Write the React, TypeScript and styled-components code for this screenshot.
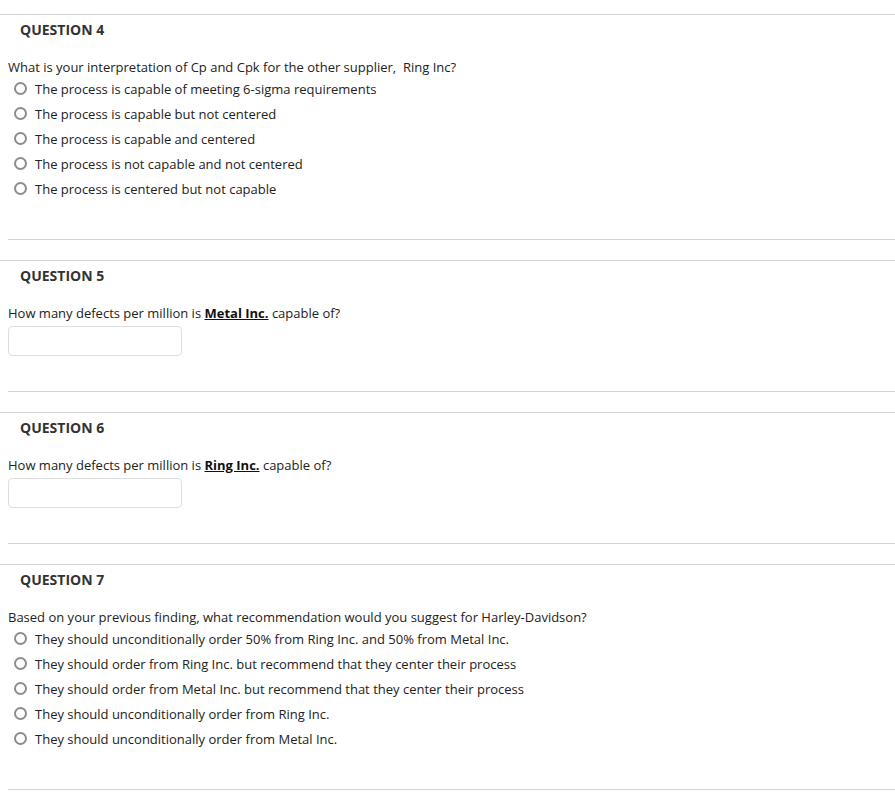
import React from "react";
import styled, { createGlobalStyle } from "styled-components";

const GlobalStyle = createGlobalStyle`
  body {
    margin: 0;
    background: #fff;
    font-family: "Open Sans", "Liberation Sans", sans-serif;
    color: #222;
  }
`;

const Page = styled.div`
  padding-top: 14px;
  width: 895px;
`;

const QuestionBlock = styled.section`
  display: flex;
  flex-direction: column;
  margin-bottom: 20px;
`;

const TopRule = styled.div`
  height: 1px;
  background: #d3d3d3;
`;

const BottomRule = styled.div`
  height: 1px;
  margin-left: 8px;
  background: #d3d3d3;
`;

const Heading = styled.h3`
  margin: 6px 0 0 20px;
  font-size: 14px;
  line-height: 18px;
  font-weight: 700;
  color: #333;
`;

const Prompt = styled.div`
  margin: 19px 0 0 8px;
  font-size: 13px;
  line-height: 18px;
  color: #222;
`;

const Strong = styled.span`
  font-weight: 700;
  color: #111;
  text-decoration: underline;
`;

const OptionList = styled.div`
  display: flex;
  flex-direction: column;
  margin-bottom: 38px;
`;

const Option = styled.label`
  display: flex;
  align-items: center;
  height: 25px;
  padding-left: 14px;
  font-size: 13px;
  color: #222;
`;

const Radio = styled.span`
  box-sizing: border-box;
  width: 13px;
  height: 13px;
  border: 2px solid #8c8c8c;
  border-radius: 50%;
  margin-right: 8px;
  flex-shrink: 0;
`;

const AnswerBox = styled.input`
  box-sizing: border-box;
  width: 174px;
  height: 30px;
  margin: 4px 0 35px 8px;
  border: 1px solid #dedede;
  border-radius: 4px;
  background: #fff;
  outline: none;
`;

type Question = {
  number: number;
  prompt: React.ReactNode;
  options?: string[];
  textInput?: boolean;
};

const questions: Question[] = [
  {
    number: 4,
    prompt: "What is your interpretation of Cp and Cpk for the other supplier,\u00a0 Ring Inc?",
    options: [
      "The process is capable of meeting 6-sigma requirements",
      "The process is capable but not centered",
      "The process is capable and centered",
      "The process is not capable and not centered",
      "The process is centered but not capable",
    ],
  },
  {
    number: 5,
    prompt: (
      <>
        How many defects per million is <Strong>Metal Inc.</Strong> capable of?
      </>
    ),
    textInput: true,
  },
  {
    number: 6,
    prompt: (
      <>
        How many defects per million is <Strong>Ring Inc.</Strong> capable of?
      </>
    ),
    textInput: true,
  },
  {
    number: 7,
    prompt: "Based on your previous finding, what recommendation would you suggest for Harley-Davidson?",
    options: [
      "They should unconditionally order 50% from Ring Inc. and 50% from Metal Inc.",
      "They should order from Ring Inc. but recommend that they center their process",
      "They should order from Metal Inc. but recommend that they center their process",
      "They should unconditionally order from Ring Inc.",
      "They should unconditionally order from Metal Inc.",
    ],
  },
];

const App = () => {
  return (
    <Page>
      <GlobalStyle />
      {questions.map((q) => (
        <QuestionBlock key={q.number}>
          <TopRule />
          <Heading>QUESTION {q.number}</Heading>
          <Prompt>{q.prompt}</Prompt>
          {q.options && (
            <OptionList>
              {q.options.map((opt) => (
                <Option key={opt}>
                  <Radio />
                  <span>{opt}</span>
                </Option>
              ))}
            </OptionList>
          )}
          {q.textInput && <AnswerBox type="text" />}
          <BottomRule />
        </QuestionBlock>
      ))}
    </Page>
  );
};

export default App;
